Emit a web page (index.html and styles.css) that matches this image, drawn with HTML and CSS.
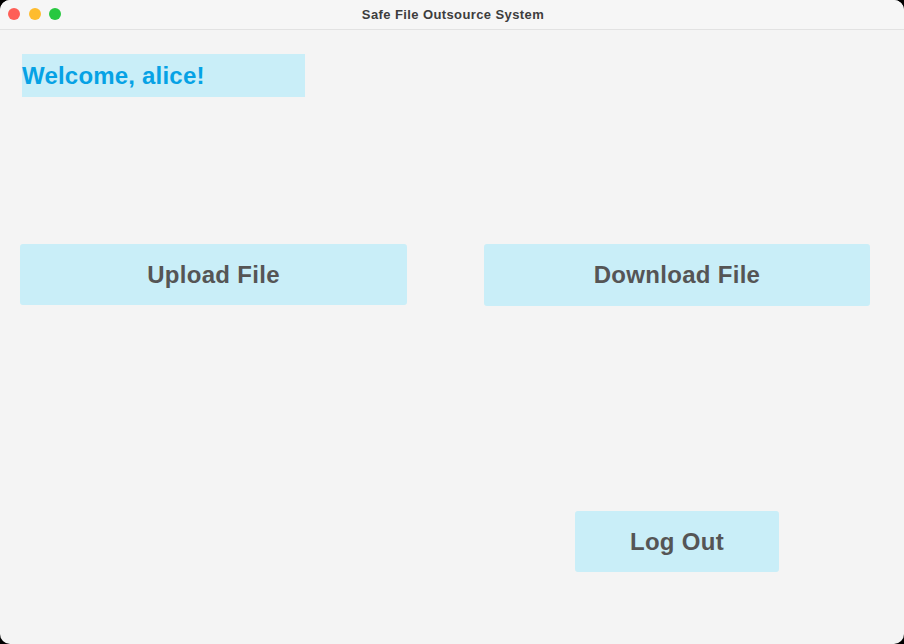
FILE: index.html
```html
<!DOCTYPE html>
<html>
<head>
<meta charset="utf-8">
<link rel="stylesheet" href="styles.css">
</head>
<body>
<div class="window">
  <div class="titlebar">
    <div class="lights">
      <span class="light red"></span>
      <span class="light yellow"></span>
      <span class="light green"></span>
    </div>
    <div class="title">Safe File Outsource System</div>
  </div>
  <div class="content">
    <div class="welcome">Welcome, alice!</div>
    <div class="grid">
      <div class="btn upload">Upload File</div>
      <div class="btn download">Download File</div>
      <div class="btn logout">Log Out</div>
    </div>
  </div>
</div>
</body>
</html>
```
FILE: styles.css
```css
html, body {
  margin: 0;
  padding: 0;
  background: #000;
  width: 904px;
  height: 644px;
  overflow: hidden;
}
.window {
  width: 904px;
  height: 644px;
  background: #f4f4f4;
  border-radius: 10px;
  overflow: hidden;
  display: flex;
  flex-direction: column;
  font-family: "Liberation Sans", Arial, sans-serif;
}
.titlebar {
  height: 29px;
  border-bottom: 1px solid #e2e2e2;
  background: #f6f6f6;
  display: flex;
  align-items: center;
  justify-content: center;
  position: relative;
  flex-shrink: 0;
}
.lights {
  position: absolute;
  left: 8px;
  top: 8px;
  display: flex;
  gap: 8.5px;
}
.light {
  width: 12px;
  height: 12px;
  border-radius: 50%;
  display: block;
}
.red { background: #fe5f57; }
.yellow { background: #febc2e; }
.green { background: #28c840; }
.title {
  font-size: 13px;
  font-weight: bold;
  letter-spacing: 0.4px;
  color: #3d3d3d;
  margin-left: 2px;
}
.content {
  flex: 1;
  padding: 24px 34px 0 20px;
  display: flex;
  flex-direction: column;
}
.welcome {
  margin-left: 2px;
  width: 283px;
  height: 43px;
  background: #c9eef8;
  color: #06a2e5;
  font-size: 24px;
  font-weight: bold;
  letter-spacing: 0.2px;
  display: flex;
  align-items: center;
}
.grid {
  margin-top: 147px;
  display: grid;
  grid-template-columns: 387px 386px;
  column-gap: 77px;
  row-gap: 205px;
}
.btn {
  background: #c9eef8;
  border-radius: 3px;
  color: #555555;
  font-size: 24px;
  font-weight: bold;
  letter-spacing: 0.3px;
  display: flex;
  align-items: center;
  justify-content: center;
  height: 61px;
}
.download {
  height: 62px;
}
.logout {
  grid-column: 2;
  justify-self: center;
  width: 204px;
  height: 61px;
}
```
